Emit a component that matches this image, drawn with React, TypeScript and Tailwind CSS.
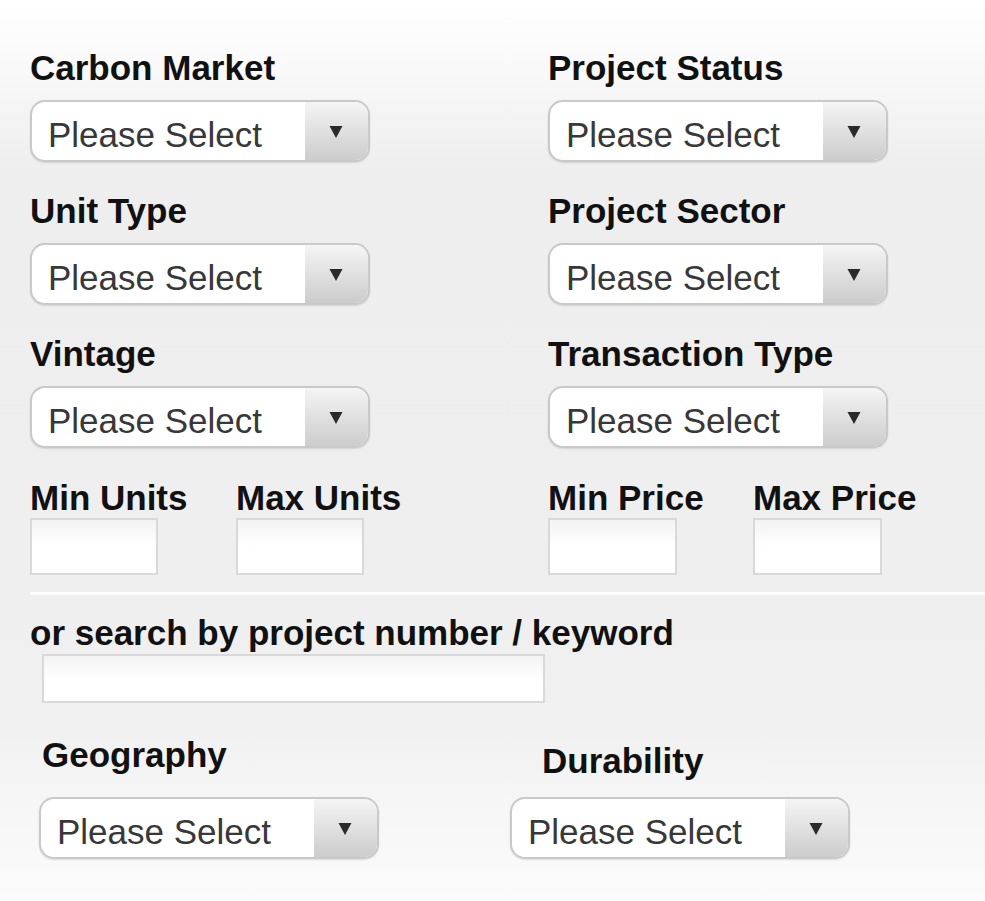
import React from "react";

const font = { fontFamily: '"Liberation Sans", Arial, sans-serif' };

const Label = ({ children, className = "" }: { children: React.ReactNode; className?: string }) => (
  <p className={`h-[40px] whitespace-nowrap text-[35px] font-bold leading-[40px] text-[#111111] ${className}`}>
    {children}
  </p>
);

const Select = ({ className = "" }: { className?: string }) => (
  <div
    className={`flex h-[62px] w-[340px] overflow-hidden rounded-[15px] border-2 border-[#c9c9c9] bg-white shadow-[0_1px_2px_rgba(0,0,0,0.12)] ${className}`}
  >
    <div className="flex flex-1 items-center pl-[16px] pt-[8px] text-[35px] leading-[40px] text-[#383838]">
      Please Select
    </div>
    <div className="flex w-[63px] items-center justify-center bg-linear-to-b from-[#f5f5f5] to-[#cccccc]">
      <svg width="14" height="12" viewBox="0 0 14 12" className="mr-[2px] mt-[2px]">
        <polygon points="0.5,0 13.5,0 7,12" fill="#2a2a2a" />
      </svg>
    </div>
  </div>
);

const Box = ({ className = "" }: { className?: string }) => (
  <div
    className={`border-2 border-[#d9d9d9] bg-linear-to-b from-[#f3f3f3] via-white to-white ${className}`}
  />
);

const Field = ({ label }: { label: string }) => (
  <div className="flex flex-col">
    <Label>{label}</Label>
    <Select className="mt-[12px]" />
  </div>
);

const App = () => {
  return (
    <main
      style={font}
      className="min-h-screen w-full bg-[linear-gradient(to_bottom,#ffffff_0px,#fcfcfc_40px,#eeeeee_170px,#efefef_590px,#f0f0f0_720px,#f6f6f6_800px,#fbfbfb_901px)] pt-[48px] pl-[30px]"
    >
      <div className="flex flex-col gap-[29px]">
        <div className="flex">
          <div className="w-[518px]">
            <Field label="Carbon Market" />
          </div>
          <Field label="Project Status" />
        </div>
        <div className="flex">
          <div className="w-[518px]">
            <Field label="Unit Type" />
          </div>
          <Field label="Project Sector" />
        </div>
        <div className="flex">
          <div className="w-[518px]">
            <Field label="Vintage" />
          </div>
          <Field label="Transaction Type" />
        </div>
        <div className="flex pt-[1px]">
          <div className="flex w-[518px]">
            <div className="w-[206px]">
              <Label>Min Units</Label>
              <Box className="h-[57px] w-[128px]" />
            </div>
            <div>
              <Label>Max Units</Label>
              <Box className="h-[57px] w-[128px]" />
            </div>
          </div>
          <div className="flex">
            <div className="w-[205px]">
              <Label>Min Price</Label>
              <Box className="h-[57px] w-[129px]" />
            </div>
            <div>
              <Label>Max Price</Label>
              <Box className="h-[57px] w-[129px]" />
            </div>
          </div>
        </div>
      </div>

      <div className="mt-[17px] h-[3px] bg-white" />

      <div className="mt-[18px]">
        <Label>or search by project number / keyword</Label>
        <Box className="ml-[12px] mt-[1px] h-[49px] w-[503px]" />
      </div>

      <div className="mt-[32px] flex pb-[40px]">
        <div className="flex w-[480px] flex-col">
          <Label className="ml-[12px]">Geography</Label>
          <Select className="ml-[9px] mt-[22px]" />
        </div>
        <div className="flex flex-col">
          <Label className="ml-[32px] mt-[6px]">Durability</Label>
          <Select className="mt-[16px]" />
        </div>
      </div>
    </main>
  );
};

export default App;
